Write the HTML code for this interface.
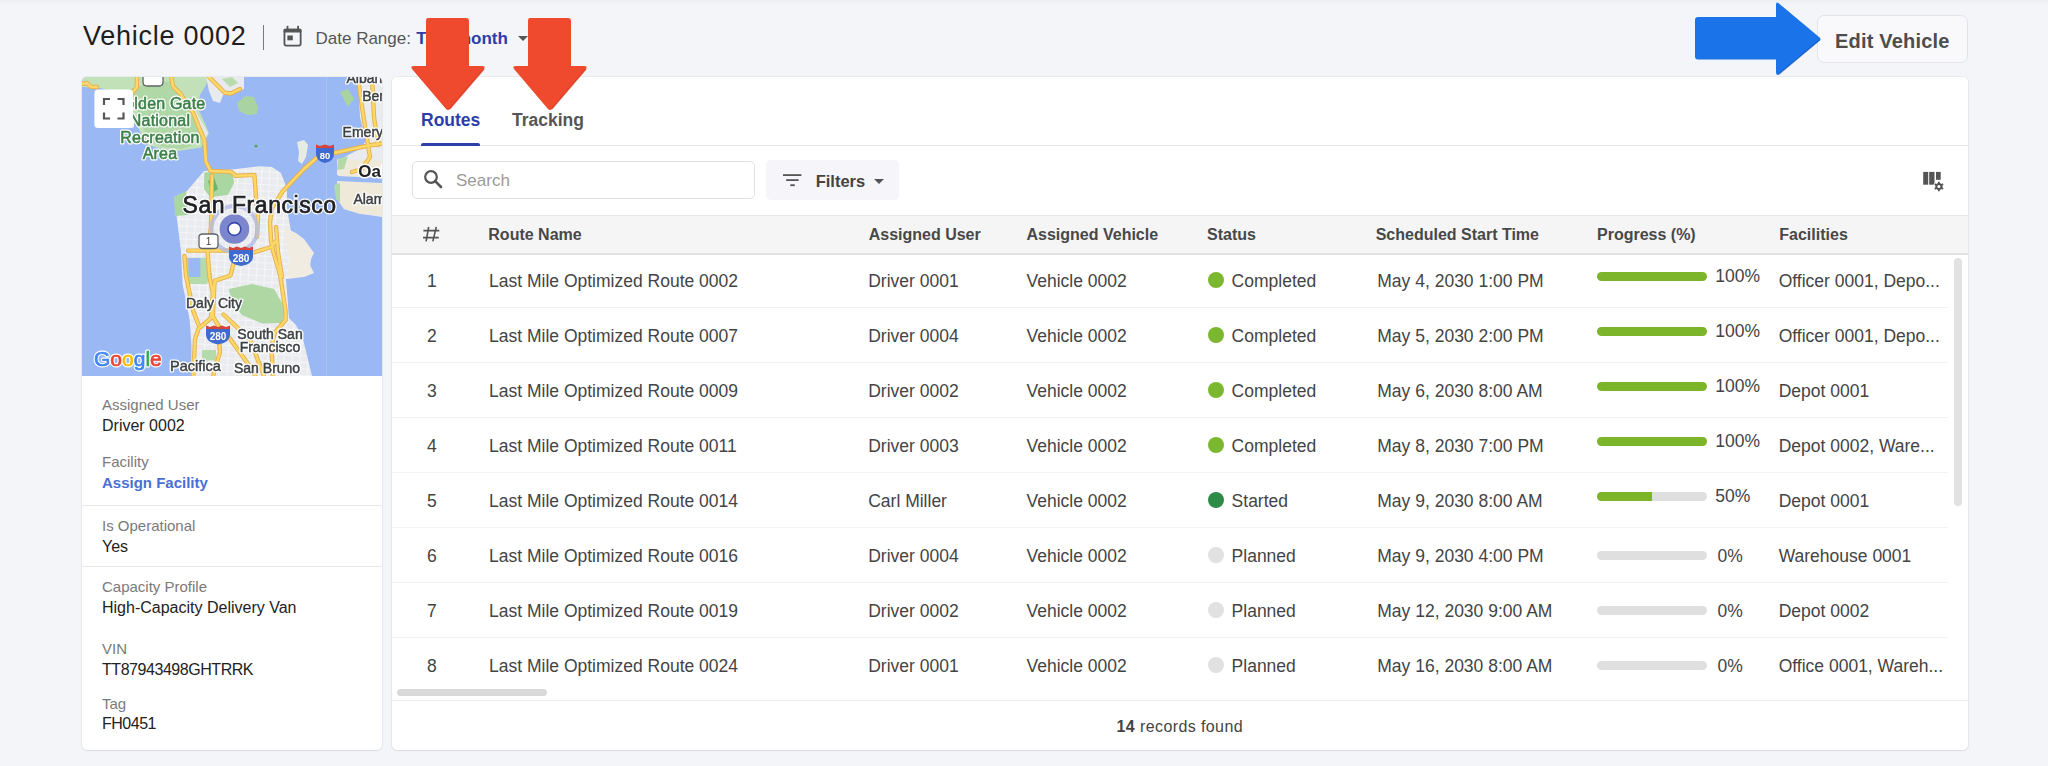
<!DOCTYPE html><html><head><meta charset="utf-8"><title>Vehicle 0002</title><style>html,body{margin:0;padding:0}
body{width:2048px;height:766px;overflow:hidden;position:relative;background:linear-gradient(#edeef2 0px,#f4f5f8 4.5px,#f4f5f8 100%);font-family:"Liberation Sans",sans-serif}
.t{position:absolute;white-space:nowrap;line-height:1}
.card{position:absolute;background:#fff;border-radius:5px;box-shadow:0 0 0 1px rgba(0,0,0,0.045),0 1px 2px rgba(0,0,0,0.06)}
</style></head><body>
<div class="t" style="left:83px;top:22.54px;font-size:27px;color:#1e1e1e;font-weight:normal;letter-spacing:0.75px">Vehicle 0002</div>
<div style="position:absolute;left:262.5px;top:25px;width:1.8px;height:24.7px;background:#7a7a7a"></div>
<svg style="position:absolute;left:283px;top:25px" width="20" height="23" viewBox="0 0 20 23"><rect x="1.45" y="4.6" width="16.2" height="16" rx="1.8" fill="none" stroke="#555" stroke-width="1.8"/><rect x="0.6" y="3.8" width="17.9" height="3.6" rx="1" fill="#555"/><rect x="3.6" y="0.9" width="1.8" height="4" fill="#555"/><rect x="14.2" y="0.9" width="1.8" height="4" fill="#555"/><rect x="4.4" y="10.5" width="5.4" height="4.8" fill="#555"/></svg>
<div class="t" style="left:315.5px;top:29.61px;font-size:17px;color:#555;font-weight:normal;">Date Range:</div>
<div class="t" style="left:416.3px;top:29.61px;font-size:17px;color:#2b3eaa;font-weight:bold;">This month</div>
<div style="position:absolute;left:518px;top:36px;width:0;height:0;border-left:5px solid transparent;border-right:5px solid transparent;border-top:5px solid #555"></div>
<div style="position:absolute;left:1817px;top:15px;width:149px;height:46px;border:1px solid #e3e4e9;border-radius:7px;background:#f9f9fb"></div>
<div class="t" style="left:1835px;top:30.67px;font-size:20px;color:#4d4d4d;font-weight:bold;letter-spacing:0.2px">Edit Vehicle</div>
<div class="card" style="left:82px;top:77px;width:300px;height:673px"></div>
<div style="position:absolute;left:82px;top:77px;width:300px;height:299px;overflow:hidden;border-radius:5px 5px 0 0;will-change:transform"><svg width="300" height="299" viewBox="0 0 300 299" style="display:block">
<defs>
<pattern id="grid" width="8" height="6.5" patternUnits="userSpaceOnUse" patternTransform="rotate(3)"><rect width="8" height="6.5" fill="#e9ebee"/><path d="M0 0.5H8M0.5 0V6.5" stroke="#f5f6f8" stroke-width="1"/></pattern>
</defs>
<rect width="300" height="299" fill="#99b8f4"/>
<!-- Marin -->
<path d="M0 0H126L124 8L118 18L116 31L127 56L119 70.5L96 74L80 72L66 68L58 55L52 40L46 26L34 15L18 11L0 10Z" fill="#c2e1b8"/>
<path d="M48 12L70 6L90 4L100 16L112 34L120 52L118 66L100 72L80 70L66 62L58 44Z" fill="#b0d8a6"/>
<path d="M100 16L113 33L126 56L121 68L118 54L110 36Z" fill="#e6e9ec"/>
<path d="M124 0H162V12L152 17L141 18L138 26L131 24L127 14Z" fill="#e8eaed"/>
<path d="M140 2L150 0L156 6L148 10Z" fill="#b8dcae"/>
<!-- Angel island / Alcatraz -->
<path d="M155 26L163 19L172 20L176 30L175 37L165 38L157 34Z" fill="#a9d4a2"/>
<circle cx="174" cy="69" r="1.6" fill="#5da35a"/>
<!-- Treasure island -->
<path d="M215 65L222 63L226 68L224 80L220 87L216 84L217 75Z" fill="#e6ece2"/>
<!-- East bay -->
<path d="M276 0H300V140L280 137L262 132L255 120L255 104L258 92L256 84L266 78L278 72L284 64L278 40Z" fill="#e9ebee"/>
<path d="M255 82L300 84V100L270 101L255 98Z" fill="#efe9d9"/>
<path d="M255 104L300 106V138L278 137L262 132L255 122Z" fill="#efe9d9"/>
<path d="M255 99L300 101V106L255 104Z" fill="#99b8f4"/>
<path d="M256 82L266 79L262 92L255 93Z" fill="#b3d9aa"/>
<path d="M252 108L258 106L258 125L254 122Z" fill="#b3d9aa"/>
<path d="M258 15L266 12L272 22L266 30Z" fill="#a9d4a2"/>
<!-- SF peninsula -->
<path d="M92 120L105 114L122 94L150 92.4L177 89.3L190 90L199 96L205 112L205 131L209 155L221 163L230 174L228 190L217 198L204 202L207 241L214 248L221 262L230 299H109L109.5 269.5L107.7 243L100.6 207L98.9 174L96 150L94 135Z" fill="url(#grid)"/>
<path d="M201 150L214 156L222 162L232 176L227 186L232 196L222 200L205 202L207 180Z" fill="#f0ece1"/>
<!-- parks -->
<path d="M122.3 95.6L150 93L152 106L146 118L128 120L122 112Z" fill="#a9d6a1"/>
<path d="M126 104L132 100L136 112L130 116Z" fill="#6db56a"/>
<path d="M92 120L104 114L106 138L93 139Z" fill="#a9d6a1"/>
<path d="M102.4 180.7L125.5 180.7L125.5 207L104 207Z" fill="#b5dbab"/>
<path d="M106 181L118.4 181L118.4 200L107 200Z" fill="#99b8f4"/>
<path d="M119 196L130 196L130 205L119 205Z" fill="#b5dbab"/>
<path d="M146.8 212L170 207L192 212L203.6 232L200 246L180 246.4L160 238L150 226Z" fill="#aed7a4"/>
<path d="M120 273L134 273L134 283.6L120 283.6Z" fill="#b5dbab"/>
<!-- tile seam -->
<rect x="244" y="0" width="0.8" height="299" fill="#b7cdf6" opacity="0.6"/>
<!-- highways -->
<g id="hw" fill="none" stroke-linecap="round" stroke-linejoin="round">
<g stroke="#e6b050" stroke-width="4.4">
<path d="M89.4 0L91 9.4L98.8 17.2L111.3 36L117.6 51.7L122.3 62.7L123.9 84.6L128.6 94L149 94.8L153.6 98.7L172.4 97.9L174 120L176 140L175 160"/>
<path d="M127 0L133.3 6.3L142.7 15.7L149 16.5L158 12"/>
<path d="M300 66.5L286.5 68.5L252 76L235.6 80L222 92L201 114L190 131L188 145L189 163L191 173.6L198.2 198.5L203.6 234L203.6 243L193 255.3L189.4 269.5L191 299"/>
<path d="M194 150L196 175L200 200"/>
<path d="M130 98.7L129 150L125.5 173.6L127.3 198.5L130.8 216L129 241L116.6 251.7L113 262L111.3 299"/>
<path d="M106 173.6L146.8 173.6L171.6 175.4L189.4 170L194.7 163"/>
<path d="M102.4 179L104 198.5L111.3 234L116.6 248"/>
<path d="M152 184.3L148.5 198.5L132.6 203.8L130.8 239.3L136 248L148.5 262.4L166.3 287.2L173.4 299"/>
<path d="M136 248L138 275L131 299"/>
<path d="M141.5 237.5L168 262.4L182 299"/>
<path d="M276 0L280 30L286 68L288 80L280 92L270 95"/>
<path d="M290 0L292 40L296 68"/>
<path d="M0 7L5 6L9 10L15 10"/>
<path d="M55 0L54.8 10.4L50 16"/>
</g>
<g stroke="#fdd866" stroke-width="2.5">
<path d="M89.4 0L91 9.4L98.8 17.2L111.3 36L117.6 51.7L122.3 62.7L123.9 84.6L128.6 94L149 94.8L153.6 98.7L172.4 97.9L174 120L176 140L175 160"/>
<path d="M127 0L133.3 6.3L142.7 15.7L149 16.5L158 12"/>
<path d="M300 66.5L286.5 68.5L252 76L235.6 80L222 92L201 114L190 131L188 145L189 163L191 173.6L198.2 198.5L203.6 234L203.6 243L193 255.3L189.4 269.5L191 299"/>
<path d="M194 150L196 175L200 200"/>
<path d="M130 98.7L129 150L125.5 173.6L127.3 198.5L130.8 216L129 241L116.6 251.7L113 262L111.3 299"/>
<path d="M106 173.6L146.8 173.6L171.6 175.4L189.4 170L194.7 163"/>
<path d="M102.4 179L104 198.5L111.3 234L116.6 248"/>
<path d="M152 184.3L148.5 198.5L132.6 203.8L130.8 239.3L136 248L148.5 262.4L166.3 287.2L173.4 299"/>
<path d="M136 248L138 275L131 299"/>
<path d="M141.5 237.5L168 262.4L182 299"/>
<path d="M276 0L280 30L286 68L288 80L280 92L270 95"/>
<path d="M290 0L292 40L296 68"/>
<path d="M0 7L5 6L9 10L15 10"/>
<path d="M55 0L54.8 10.4L50 16"/>
</g>
</g>
<!-- location marker -->
<circle cx="152.4" cy="152" r="23" fill="none" stroke="#b3bae4" stroke-width="4" opacity="0.8"/>
<circle cx="152.4" cy="152" r="14.8" fill="#7b86cc"/>
<circle cx="152.4" cy="152" r="6.4" fill="#fff" stroke="#3949ab" stroke-width="1.6"/>
<!-- shields -->
<path d="M117 160Q117 157 121 157H132Q136 157 136 160V168.5Q136 171.5 132 171.5H121Q117 171.5 117 168.5Z" fill="#fff" stroke="#5f6368" stroke-width="1.3"/>
<text x="126.5" y="168.3" font-size="10" text-anchor="middle" fill="#3c4043" font-family="Liberation Sans">1</text>
<path d="M147 172L171 172L171 180Q171 187 159 189Q147 187 147 180Z" fill="#3f6ad0"/>
<path d="M147 169.5L151 171L155 169.5L159 171L163 169.5L167 171L171 169.5V173H147Z" fill="#d6443a"/>
<text x="159" y="184.5" font-size="10" font-weight="bold" text-anchor="middle" fill="#fff" font-family="Liberation Sans">280</text>
<path d="M234 70L252 70L252 77Q252 84 243 86Q234 84 234 77Z" fill="#3f6ad0"/>
<path d="M234 67.5L238 69L243 67.5L248 69L252 67.5V71H234Z" fill="#d6443a"/>
<text x="243" y="81.5" font-size="9.5" font-weight="bold" text-anchor="middle" fill="#fff" font-family="Liberation Sans">80</text>
<path d="M124 251L148 251L148 258Q148 265.5 136 267.5Q124 265.5 124 258Z" fill="#3f6ad0"/>
<path d="M124 248.5L128 250L132 248.5L136 250L140 248.5L144 250L148 248.5V252H124Z" fill="#d6443a"/>
<text x="136" y="263" font-size="10" font-weight="bold" text-anchor="middle" fill="#fff" font-family="Liberation Sans">280</text>
<path d="M61 -3H81V5Q81 9 77 9H65Q61 9 61 5Z" fill="#fff" stroke="#5f6368" stroke-width="1.3"/>
<!-- labels -->
<g font-family="Liberation Sans" fill="#fff" stroke="#fff" stroke-width="3" stroke-linejoin="round">
<text x="77" y="32.3" font-size="16" text-anchor="middle" letter-spacing="0.2">Golden Gate</text>
<text x="78" y="49" font-size="16" text-anchor="middle" letter-spacing="0.2">National</text>
<text x="78" y="65.6" font-size="16" text-anchor="middle" letter-spacing="0.2">Recreation</text>
<text x="78" y="82.2" font-size="16" text-anchor="middle" letter-spacing="0.2">Area</text>
<text x="100.5" y="135.5" font-size="23" text-anchor="start" letter-spacing="0.55">San Francisco</text>
<text x="104" y="231.3" font-size="14" text-anchor="start" letter-spacing="0">Daly City</text>
<text x="188" y="261.6" font-size="14" text-anchor="middle" letter-spacing="0">South San</text>
<text x="188" y="275.3" font-size="14" text-anchor="middle" letter-spacing="0">Francisco</text>
<text x="152" y="296" font-size="14" text-anchor="start" letter-spacing="0">San Bruno</text>
<text x="88" y="294" font-size="14.5" text-anchor="start" letter-spacing="0">Pacifica</text>
<text x="260.6" y="59.7" font-size="14" text-anchor="start" letter-spacing="0">Emeryville</text>
<text x="271.4" y="126.9" font-size="14" text-anchor="start" letter-spacing="0">Alameda</text>
<text x="280.2" y="23.5" font-size="14" text-anchor="start" letter-spacing="0">Berkeley</text>
<text x="264.5" y="6" font-size="14" text-anchor="start" letter-spacing="0">Albany</text>
<text x="276.3" y="99.9" font-size="17" font-weight="bold">Oakland</text></g>
<g font-family="Liberation Sans">
<text x="77" y="32.3" font-size="16" text-anchor="middle" letter-spacing="0.2" fill="#3d8049" stroke="#3d8049" stroke-width="0.55">Golden Gate</text>
<text x="78" y="49" font-size="16" text-anchor="middle" letter-spacing="0.2" fill="#3d8049" stroke="#3d8049" stroke-width="0.55">National</text>
<text x="78" y="65.6" font-size="16" text-anchor="middle" letter-spacing="0.2" fill="#3d8049" stroke="#3d8049" stroke-width="0.55">Recreation</text>
<text x="78" y="82.2" font-size="16" text-anchor="middle" letter-spacing="0.2" fill="#3d8049" stroke="#3d8049" stroke-width="0.55">Area</text>
<text x="100.5" y="135.5" font-size="23" text-anchor="start" letter-spacing="0.55" fill="#202124" stroke="#202124" stroke-width="0.7">San Francisco</text>
<text x="104" y="231.3" font-size="14" text-anchor="start" letter-spacing="0" fill="#3c4043" stroke="#3c4043" stroke-width="0.45">Daly City</text>
<text x="188" y="261.6" font-size="14" text-anchor="middle" letter-spacing="0" fill="#3c4043" stroke="#3c4043" stroke-width="0.45">South San</text>
<text x="188" y="275.3" font-size="14" text-anchor="middle" letter-spacing="0" fill="#3c4043" stroke="#3c4043" stroke-width="0.45">Francisco</text>
<text x="152" y="296" font-size="14" text-anchor="start" letter-spacing="0" fill="#3c4043" stroke="#3c4043" stroke-width="0.45">San Bruno</text>
<text x="88" y="294" font-size="14.5" text-anchor="start" letter-spacing="0" fill="#3c4043" stroke="#3c4043" stroke-width="0.45">Pacifica</text>
<text x="260.6" y="59.7" font-size="14" text-anchor="start" letter-spacing="0" fill="#3c4043" stroke="#3c4043" stroke-width="0.45">Emeryville</text>
<text x="271.4" y="126.9" font-size="14" text-anchor="start" letter-spacing="0" fill="#3c4043" stroke="#3c4043" stroke-width="0.45">Alameda</text>
<text x="280.2" y="23.5" font-size="14" text-anchor="start" letter-spacing="0" fill="#3c4043" stroke="#3c4043" stroke-width="0.45">Berkeley</text>
<text x="264.5" y="6" font-size="14" text-anchor="start" letter-spacing="0" fill="#3c4043" stroke="#3c4043" stroke-width="0.45">Albany</text>
<text x="276.3" y="99.9" font-size="17" font-weight="bold" fill="#202124">Oakland</text></g>
<!-- google logo -->
<g font-family="Liberation Sans" font-size="21">
<text x="12" y="288.5" fill="#fff" stroke="#fff" stroke-width="3" stroke-linejoin="round">Google</text>
<text x="12" y="288.5" stroke-width="0.7"><tspan fill="#4285f4" stroke="#4285f4">G</tspan><tspan fill="#ea4335" stroke="#ea4335">o</tspan><tspan fill="#fbbc05" stroke="#fbbc05">o</tspan><tspan fill="#4285f4" stroke="#4285f4">g</tspan><tspan fill="#34a853" stroke="#34a853">l</tspan><tspan fill="#ea4335" stroke="#ea4335">e</tspan></text>
</g>
<!-- fullscreen button -->
<rect x="12.4" y="12.4" width="38.6" height="38.6" rx="3.5" fill="#fff"/>
<path d="M22 28V22H28M35.5 22H41.5V28M41.5 35.5V41.5H35.5M28 41.5H22V35.5" fill="none" stroke="#555" stroke-width="2.2"/>
</svg>
</div>
<div class="t" style="left:102px;top:397.20px;font-size:15px;color:#7a7a7a;font-weight:normal;">Assigned User</div>
<div class="t" style="left:102px;top:417.96px;font-size:16px;color:#222;font-weight:normal;">Driver 0002</div>
<div class="t" style="left:102px;top:453.50px;font-size:15px;color:#7a7a7a;font-weight:normal;">Facility</div>
<div class="t" style="left:102px;top:474.60px;font-size:15px;color:#4a6fd6;font-weight:bold;">Assign Facility</div>
<div style="position:absolute;left:82px;top:505px;width:300px;height:1px;background:#e9e9e9"></div>
<div class="t" style="left:102px;top:518.00px;font-size:15px;color:#7a7a7a;font-weight:normal;">Is Operational</div>
<div class="t" style="left:102px;top:538.96px;font-size:16px;color:#222;font-weight:normal;">Yes</div>
<div style="position:absolute;left:82px;top:566px;width:300px;height:1px;background:#e9e9e9"></div>
<div class="t" style="left:102px;top:578.90px;font-size:15px;color:#7a7a7a;font-weight:normal;">Capacity Profile</div>
<div class="t" style="left:102px;top:599.76px;font-size:16px;color:#222;font-weight:normal;">High-Capacity Delivery Van</div>
<div class="t" style="left:102px;top:641.40px;font-size:15px;color:#7a7a7a;font-weight:normal;">VIN</div>
<div class="t" style="left:102px;top:662.06px;font-size:16px;color:#222;font-weight:normal;letter-spacing:-0.45px">TT87943498GHTRRK</div>
<div class="t" style="left:102px;top:695.80px;font-size:15px;color:#7a7a7a;font-weight:normal;">Tag</div>
<div class="t" style="left:102px;top:716.16px;font-size:16px;color:#222;font-weight:normal;letter-spacing:-0.5px">FH0451</div>
<div class="card" style="left:392px;top:77px;width:1576px;height:673px"></div>
<div style="position:absolute;left:392px;top:145px;width:1576px;height:1px;background:#e6e6e6"></div>
<div class="t" style="left:421px;top:112.29px;font-size:17.5px;color:#2b3eaa;font-weight:bold;">Routes</div>
<div class="t" style="left:512px;top:112.29px;font-size:17.5px;color:#555;font-weight:bold;">Tracking</div>
<div style="position:absolute;left:420.7px;top:143px;width:59.6px;height:3px;background:#2b3eaa;border-radius:2px 2px 0 0"></div>
<div style="position:absolute;left:412px;top:160.5px;width:341px;height:36px;border:1px solid #e2e2e2;border-radius:5px;background:#fff"></div>
<svg style="position:absolute;left:423px;top:169px" width="20" height="20" viewBox="0 0 20 20"><circle cx="8" cy="8" r="5.8" fill="none" stroke="#555" stroke-width="2.2"/><line x1="12.2" y1="12.2" x2="18" y2="18" stroke="#555" stroke-width="2.6" stroke-linecap="round"/></svg>
<div class="t" style="left:456px;top:172.31px;font-size:17px;color:#9b9b9b;font-weight:normal;">Search</div>
<div style="position:absolute;left:766px;top:160px;width:133px;height:39.5px;border-radius:5px;background:#f6f6fa"></div>
<svg style="position:absolute;left:783px;top:173px" width="19" height="14" viewBox="0 0 19 14"><rect x="0" y="1.2" width="18.4" height="1.8" fill="#555"/><rect x="3.2" y="6.2" width="12.4" height="1.8" fill="#555"/><rect x="7.3" y="11.3" width="4.5" height="1.8" fill="#555"/></svg>
<div class="t" style="left:815.7px;top:173.33px;font-size:16.5px;color:#444;font-weight:bold;">Filters</div>
<div style="position:absolute;left:874px;top:178.5px;width:0;height:0;border-left:5px solid transparent;border-right:5px solid transparent;border-top:5px solid #555"></div>
<svg style="position:absolute;left:1912px;top:162px" width="40" height="40" viewBox="0 0 40 40"><rect x="11.2" y="9.9" width="5" height="12.8" fill="#555"/><rect x="17.2" y="9.9" width="5.3" height="12.8" fill="#555"/><rect x="24" y="9.9" width="4.7" height="7.9" fill="#555"/><circle cx="26.9" cy="24.5" r="5.6" fill="#fff"/><path d="M25.91 21.04L26.07 19.67L27.73 19.67L27.89 21.04L28.70 21.38L29.40 21.91L30.67 21.37L31.50 22.80L30.39 23.63L30.50 24.50L30.39 25.37L31.50 26.20L30.67 27.63L29.40 27.09L28.70 27.62L27.89 27.96L27.73 29.33L26.07 29.33L25.91 27.96L25.10 27.62L24.40 27.09L23.13 27.63L22.30 26.20L23.41 25.37L23.30 24.50L23.41 23.63L22.30 22.80L23.13 21.37L24.40 21.91L25.10 21.38Z" fill="#555"/><circle cx="26.9" cy="24.5" r="1.5" fill="#fff"/></svg>
<div style="position:absolute;left:392px;top:214.5px;width:1576px;height:37px;background:#f5f5f5;border-top:1px solid #e6e6e6;border-bottom:2px solid #e2e2e2"></div>
<svg style="position:absolute;left:420px;top:224px" width="22" height="20" viewBox="420 224 22 20"><path d="M428.7 227L426.1 241.4M436.3 227L432.8 241.4M423.4 230.6H439.3M423 237.6H438.8" stroke="#555" stroke-width="1.6" fill="none"/></svg>
<div class="t" style="left:488.3px;top:227.36px;font-size:16px;color:#484848;font-weight:bold;">Route Name</div>
<div class="t" style="left:868.7px;top:227.36px;font-size:16px;color:#484848;font-weight:bold;">Assigned User</div>
<div class="t" style="left:1026.5px;top:227.36px;font-size:16px;color:#484848;font-weight:bold;">Assigned Vehicle</div>
<div class="t" style="left:1207px;top:227.36px;font-size:16px;color:#484848;font-weight:bold;">Status</div>
<div class="t" style="left:1375.7px;top:227.36px;font-size:16px;color:#484848;font-weight:bold;">Scheduled Start Time</div>
<div class="t" style="left:1597px;top:227.36px;font-size:16px;color:#484848;font-weight:bold;">Progress (%)</div>
<div class="t" style="left:1779.3px;top:227.36px;font-size:16px;color:#484848;font-weight:bold;">Facilities</div>
<div class="t" style="left:427px;top:272.89px;font-size:17.5px;color:#444;font-weight:normal;">1</div>
<div class="t" style="left:489px;top:272.89px;font-size:17.5px;color:#444;font-weight:normal;">Last Mile Optimized Route 0002</div>
<div class="t" style="left:868.2px;top:272.89px;font-size:17.5px;color:#444;font-weight:normal;">Driver 0001</div>
<div class="t" style="left:1026.5px;top:272.89px;font-size:17.5px;color:#444;font-weight:normal;">Vehicle 0002</div>
<div style="position:absolute;left:1208px;top:272px;width:16px;height:16px;border-radius:50%;background:#7cb82f"></div>
<div class="t" style="left:1231.6px;top:272.89px;font-size:17.5px;color:#444;font-weight:normal;">Completed</div>
<div class="t" style="left:1377.3px;top:272.89px;font-size:17.5px;color:#444;font-weight:normal;">May 4, 2030 1:00 PM</div>
<div style="position:absolute;left:1597px;top:271.5px;width:110px;height:9.5px;border-radius:5px;background:#dfdfdf;overflow:hidden"><div style="width:100%;height:100%;background:#7db52a"></div></div>
<div class="t" style="left:1715.3px;top:268.49px;font-size:17.5px;color:#444;font-weight:normal;">100%</div>
<div class="t" style="left:1778.7px;top:272.89px;font-size:17.5px;color:#444;font-weight:normal;">Officer 0001, Depo...</div>
<div style="position:absolute;left:392px;top:307px;width:1556px;height:1px;background:#f3f3f3"></div>
<div class="t" style="left:427px;top:327.89px;font-size:17.5px;color:#444;font-weight:normal;">2</div>
<div class="t" style="left:489px;top:327.89px;font-size:17.5px;color:#444;font-weight:normal;">Last Mile Optimized Route 0007</div>
<div class="t" style="left:868.2px;top:327.89px;font-size:17.5px;color:#444;font-weight:normal;">Driver 0004</div>
<div class="t" style="left:1026.5px;top:327.89px;font-size:17.5px;color:#444;font-weight:normal;">Vehicle 0002</div>
<div style="position:absolute;left:1208px;top:327px;width:16px;height:16px;border-radius:50%;background:#7cb82f"></div>
<div class="t" style="left:1231.6px;top:327.89px;font-size:17.5px;color:#444;font-weight:normal;">Completed</div>
<div class="t" style="left:1377.3px;top:327.89px;font-size:17.5px;color:#444;font-weight:normal;">May 5, 2030 2:00 PM</div>
<div style="position:absolute;left:1597px;top:326.5px;width:110px;height:9.5px;border-radius:5px;background:#dfdfdf;overflow:hidden"><div style="width:100%;height:100%;background:#7db52a"></div></div>
<div class="t" style="left:1715.3px;top:323.49px;font-size:17.5px;color:#444;font-weight:normal;">100%</div>
<div class="t" style="left:1778.7px;top:327.89px;font-size:17.5px;color:#444;font-weight:normal;">Officer 0001, Depo...</div>
<div style="position:absolute;left:392px;top:362px;width:1556px;height:1px;background:#f3f3f3"></div>
<div class="t" style="left:427px;top:382.89px;font-size:17.5px;color:#444;font-weight:normal;">3</div>
<div class="t" style="left:489px;top:382.89px;font-size:17.5px;color:#444;font-weight:normal;">Last Mile Optimized Route 0009</div>
<div class="t" style="left:868.2px;top:382.89px;font-size:17.5px;color:#444;font-weight:normal;">Driver 0002</div>
<div class="t" style="left:1026.5px;top:382.89px;font-size:17.5px;color:#444;font-weight:normal;">Vehicle 0002</div>
<div style="position:absolute;left:1208px;top:382px;width:16px;height:16px;border-radius:50%;background:#7cb82f"></div>
<div class="t" style="left:1231.6px;top:382.89px;font-size:17.5px;color:#444;font-weight:normal;">Completed</div>
<div class="t" style="left:1377.3px;top:382.89px;font-size:17.5px;color:#444;font-weight:normal;">May 6, 2030 8:00 AM</div>
<div style="position:absolute;left:1597px;top:381.5px;width:110px;height:9.5px;border-radius:5px;background:#dfdfdf;overflow:hidden"><div style="width:100%;height:100%;background:#7db52a"></div></div>
<div class="t" style="left:1715.3px;top:378.49px;font-size:17.5px;color:#444;font-weight:normal;">100%</div>
<div class="t" style="left:1778.7px;top:382.89px;font-size:17.5px;color:#444;font-weight:normal;">Depot 0001</div>
<div style="position:absolute;left:392px;top:417px;width:1556px;height:1px;background:#f3f3f3"></div>
<div class="t" style="left:427px;top:437.89px;font-size:17.5px;color:#444;font-weight:normal;">4</div>
<div class="t" style="left:489px;top:437.89px;font-size:17.5px;color:#444;font-weight:normal;">Last Mile Optimized Route 0011</div>
<div class="t" style="left:868.2px;top:437.89px;font-size:17.5px;color:#444;font-weight:normal;">Driver 0003</div>
<div class="t" style="left:1026.5px;top:437.89px;font-size:17.5px;color:#444;font-weight:normal;">Vehicle 0002</div>
<div style="position:absolute;left:1208px;top:437px;width:16px;height:16px;border-radius:50%;background:#7cb82f"></div>
<div class="t" style="left:1231.6px;top:437.89px;font-size:17.5px;color:#444;font-weight:normal;">Completed</div>
<div class="t" style="left:1377.3px;top:437.89px;font-size:17.5px;color:#444;font-weight:normal;">May 8, 2030 7:00 PM</div>
<div style="position:absolute;left:1597px;top:436.5px;width:110px;height:9.5px;border-radius:5px;background:#dfdfdf;overflow:hidden"><div style="width:100%;height:100%;background:#7db52a"></div></div>
<div class="t" style="left:1715.3px;top:433.49px;font-size:17.5px;color:#444;font-weight:normal;">100%</div>
<div class="t" style="left:1778.7px;top:437.89px;font-size:17.5px;color:#444;font-weight:normal;">Depot 0002, Ware...</div>
<div style="position:absolute;left:392px;top:472px;width:1556px;height:1px;background:#f3f3f3"></div>
<div class="t" style="left:427px;top:492.89px;font-size:17.5px;color:#444;font-weight:normal;">5</div>
<div class="t" style="left:489px;top:492.89px;font-size:17.5px;color:#444;font-weight:normal;">Last Mile Optimized Route 0014</div>
<div class="t" style="left:868.2px;top:492.89px;font-size:17.5px;color:#444;font-weight:normal;">Carl Miller</div>
<div class="t" style="left:1026.5px;top:492.89px;font-size:17.5px;color:#444;font-weight:normal;">Vehicle 0002</div>
<div style="position:absolute;left:1208px;top:492px;width:16px;height:16px;border-radius:50%;background:#2e8b47"></div>
<div class="t" style="left:1231.6px;top:492.89px;font-size:17.5px;color:#444;font-weight:normal;">Started</div>
<div class="t" style="left:1377.3px;top:492.89px;font-size:17.5px;color:#444;font-weight:normal;">May 9, 2030 8:00 AM</div>
<div style="position:absolute;left:1597px;top:491.5px;width:110px;height:9.5px;border-radius:5px;background:#dfdfdf;overflow:hidden"><div style="width:50%;height:100%;background:#7db52a"></div></div>
<div class="t" style="left:1715.3px;top:488.49px;font-size:17.5px;color:#444;font-weight:normal;">50%</div>
<div class="t" style="left:1778.7px;top:492.89px;font-size:17.5px;color:#444;font-weight:normal;">Depot 0001</div>
<div style="position:absolute;left:392px;top:527px;width:1556px;height:1px;background:#f3f3f3"></div>
<div class="t" style="left:427px;top:547.89px;font-size:17.5px;color:#444;font-weight:normal;">6</div>
<div class="t" style="left:489px;top:547.89px;font-size:17.5px;color:#444;font-weight:normal;">Last Mile Optimized Route 0016</div>
<div class="t" style="left:868.2px;top:547.89px;font-size:17.5px;color:#444;font-weight:normal;">Driver 0004</div>
<div class="t" style="left:1026.5px;top:547.89px;font-size:17.5px;color:#444;font-weight:normal;">Vehicle 0002</div>
<div style="position:absolute;left:1208px;top:547px;width:16px;height:16px;border-radius:50%;background:#e1e1e1"></div>
<div class="t" style="left:1231.6px;top:547.89px;font-size:17.5px;color:#444;font-weight:normal;">Planned</div>
<div class="t" style="left:1377.3px;top:547.89px;font-size:17.5px;color:#444;font-weight:normal;">May 9, 2030 4:00 PM</div>
<div style="position:absolute;left:1597px;top:550.5px;width:110px;height:9.5px;border-radius:5px;background:#dfdfdf;overflow:hidden"><div style="width:0%;height:100%;background:#7db52a"></div></div>
<div class="t" style="left:1717.5px;top:547.89px;font-size:17.5px;color:#444;font-weight:normal;">0%</div>
<div class="t" style="left:1778.7px;top:547.89px;font-size:17.5px;color:#444;font-weight:normal;">Warehouse 0001</div>
<div style="position:absolute;left:392px;top:582px;width:1556px;height:1px;background:#f3f3f3"></div>
<div class="t" style="left:427px;top:602.89px;font-size:17.5px;color:#444;font-weight:normal;">7</div>
<div class="t" style="left:489px;top:602.89px;font-size:17.5px;color:#444;font-weight:normal;">Last Mile Optimized Route 0019</div>
<div class="t" style="left:868.2px;top:602.89px;font-size:17.5px;color:#444;font-weight:normal;">Driver 0002</div>
<div class="t" style="left:1026.5px;top:602.89px;font-size:17.5px;color:#444;font-weight:normal;">Vehicle 0002</div>
<div style="position:absolute;left:1208px;top:602px;width:16px;height:16px;border-radius:50%;background:#e1e1e1"></div>
<div class="t" style="left:1231.6px;top:602.89px;font-size:17.5px;color:#444;font-weight:normal;">Planned</div>
<div class="t" style="left:1377.3px;top:602.89px;font-size:17.5px;color:#444;font-weight:normal;">May 12, 2030 9:00 AM</div>
<div style="position:absolute;left:1597px;top:605.5px;width:110px;height:9.5px;border-radius:5px;background:#dfdfdf;overflow:hidden"><div style="width:0%;height:100%;background:#7db52a"></div></div>
<div class="t" style="left:1717.5px;top:602.89px;font-size:17.5px;color:#444;font-weight:normal;">0%</div>
<div class="t" style="left:1778.7px;top:602.89px;font-size:17.5px;color:#444;font-weight:normal;">Depot 0002</div>
<div style="position:absolute;left:392px;top:637px;width:1556px;height:1px;background:#f3f3f3"></div>
<div class="t" style="left:427px;top:657.89px;font-size:17.5px;color:#444;font-weight:normal;">8</div>
<div class="t" style="left:489px;top:657.89px;font-size:17.5px;color:#444;font-weight:normal;">Last Mile Optimized Route 0024</div>
<div class="t" style="left:868.2px;top:657.89px;font-size:17.5px;color:#444;font-weight:normal;">Driver 0001</div>
<div class="t" style="left:1026.5px;top:657.89px;font-size:17.5px;color:#444;font-weight:normal;">Vehicle 0002</div>
<div style="position:absolute;left:1208px;top:657px;width:16px;height:16px;border-radius:50%;background:#e1e1e1"></div>
<div class="t" style="left:1231.6px;top:657.89px;font-size:17.5px;color:#444;font-weight:normal;">Planned</div>
<div class="t" style="left:1377.3px;top:657.89px;font-size:17.5px;color:#444;font-weight:normal;">May 16, 2030 8:00 AM</div>
<div style="position:absolute;left:1597px;top:660.5px;width:110px;height:9.5px;border-radius:5px;background:#dfdfdf;overflow:hidden"><div style="width:0%;height:100%;background:#7db52a"></div></div>
<div class="t" style="left:1717.5px;top:657.89px;font-size:17.5px;color:#444;font-weight:normal;">0%</div>
<div class="t" style="left:1778.7px;top:657.89px;font-size:17.5px;color:#444;font-weight:normal;">Office 0001, Wareh...</div>
<div style="position:absolute;left:1954px;top:258px;width:8px;height:248px;border-radius:4px;background:#e2e2e2"></div>
<div style="position:absolute;left:397px;top:689px;width:150px;height:7px;border-radius:4px;background:#d9d9d9"></div>
<div style="position:absolute;left:392px;top:700px;width:1576px;height:1px;background:#ececec"></div>
<div class="t" style="left:1116.5px;top:718.76px;font-size:16px;color:#444;font-weight:normal;letter-spacing:0.4px"><b>14</b> records found</div>
<svg style="position:absolute;left:0;top:0" width="2048" height="766" viewBox="0 0 2048 766">
<path d="M428 18 H466 Q469 18 469 21 V66 H482 Q486 66 484 69 L450 109 Q448 111 446 109 L412 69 Q410 66 414 66 H426 V21 Q426 18 428 18 Z" fill="#ef4a2d"/>
<path d="M530 18 H568 Q571 18 571 21 V66 H584 Q588 66 586 69 L552 109 Q550 111 548 109 L514 69 Q512 66 516 66 H528 V21 Q528 18 530 18 Z" fill="#ef4a2d"/>
<path d="M1698 17 H1776 V5 Q1776 1 1779 3.5 L1819 37 Q1822 39 1819 41 L1779 74 Q1776 76.5 1776 72 V59.5 H1698 Q1695 59.5 1695 56.5 V20 Q1695 17 1698 17 Z" fill="#1a73e8"/>
<path d="M483.5 69.5L450 108.5" stroke="#d23a22" stroke-width="1.6" stroke-linecap="round" opacity="0.7"/>
<path d="M585.5 69.5L552 108.5" stroke="#d23a22" stroke-width="1.6" stroke-linecap="round" opacity="0.7"/>
<path d="M1819.5 40L1779 74" stroke="#1259bd" stroke-width="1.6" stroke-linecap="round" opacity="0.7"/>
</svg>
</body></html>
